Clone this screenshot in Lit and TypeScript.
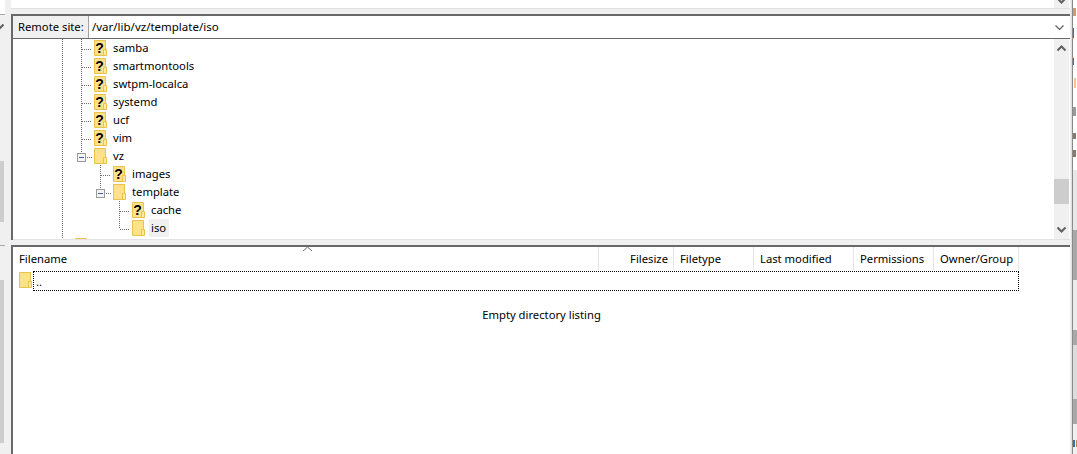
import { LitElement, html, css, svg } from "lit";
import { customElement } from "lit/decorators.js";
import { styleMap } from "lit/directives/style-map.js";

type Row = {
  name: string;
  icon: number;
  q: boolean;
  v: [number, number, number][];
  h?: [number, number];
  box?: number;
  selected?: boolean;
};

const X1 = 62, X2 = 81, X3 = 100, X4 = 119;
const leaf = (name: string): Row => ({
  name, icon: 94, q: true,
  v: [[X1, 0, 18], [X2, 0, 18]],
  h: [82, 92],
});
const rows: Row[] = [
  leaf("samba"), leaf("smartmontools"), leaf("swtpm-localca"), leaf("systemd"), leaf("ucf"), leaf("vim"),
  { name: "vz", icon: 94, q: false, v: [[X1, 0, 18], [X2, 0, 6], [X3, 16, 18]], h: [87, 92], box: 77 },
  { name: "images", icon: 113, q: true, v: [[X1, 0, 18], [X3, 0, 18]], h: [101, 111] },
  { name: "template", icon: 113, q: false, v: [[X1, 0, 18], [X3, 0, 6], [X4, 16, 18]], h: [106, 111], box: 96 },
  { name: "cache", icon: 132, q: true, v: [[X1, 0, 18], [X4, 0, 18]], h: [120, 130] },
  { name: "iso", icon: 132, q: false, v: [[X1, 0, 18], [X4, 0, 10]], h: [120, 130], selected: true },
  { name: "", icon: 75, q: false, v: [[X1, 0, 18]] },
];

const columns = [
  { label: "Filename", width: 586, end: false },
  { label: "Filesize", width: 75, end: true },
  { label: "Filetype", width: 80, end: false },
  { label: "Last modified", width: 100, end: false },
  { label: "Permissions", width: 80, end: false },
  { label: "Owner/Group", width: 85, end: false },
];

const folder = (q: boolean) => html`<svg class="folder" width="13" height="16" viewBox="0 0 13 16">
  <path d="M.5.5h11v15H.5z" fill="#fde28a" stroke="#eac24b"/>
  <path d="M9.500 15.500v-6h3v6z" fill="#ffe9a6" stroke="#eac24b"/>
  ${q ? svg`<text x="5.500" y="13" text-anchor="middle" class="qm">?</text>` : ""}
</svg>`;

const chevron = (up: boolean) => html`<svg class="chev" width="11" height="7" viewBox="0 0 11 7">
  <path d=${up ? "M1.5 5.5l4-4 4 4" : "M1.5 1.5l4 4 4-4"} fill="none" stroke="#606060" stroke-width="2"/>
</svg>`;

const guides = (r: Row) => html`<svg class="guides" width="180" height="18" viewBox="0 0 180 18">
  ${r.v.map(([x, a, b]) => svg`<line x1=${x + 0.5 - 13} x2=${x + 0.5 - 13} y1=${a} y2=${b} class="dot"/>`)}
  ${r.h ? svg`<line x1=${r.h[0] - 13} x2=${r.h[1] - 13} y1="10.5" y2="10.5" class="dot"/>` : ""}
  ${r.box !== undefined
    ? svg`<rect x=${r.box - 13 + 0.5} y="6.5" width="8" height="8" fill="#f4f4f4" stroke="#9a9a9a"/>
          <line x1=${r.box - 13 + 2} x2=${r.box - 13 + 7} y1="10.5" y2="10.5" stroke="#44619d"/>`
    : ""}
</svg>`;

@customElement("app-root")
export class AppRoot extends LitElement {
  static styles = css`
    :host {
      display: block;
      width: 1077px;
      height: 454px;
      overflow: hidden;
      font-family: "Noto Sans", "Open Sans", sans-serif;
      font-size: 11.25px;
      color: #000;
    }
    .root { display: flex; width: 1077px; height: 454px; background: #f0f0f0; }

    .left { width: 11px; flex: none; display: flex; flex-direction: column; }
    .left-top { height: 14px; background: #fff; border-bottom: 1px solid #a8a8a8; width: 5px; flex: none; box-sizing: content-box; }
    .left-track { width: 4px; height: 224px; flex: none; overflow: hidden; position: relative; }
    .left-chev { height: 23px; width: 4px; overflow: hidden; display: flex; align-items: center; justify-content: flex-end; }
    .left-chev svg { flex: none; margin-right: -1px; }
    .left-thumb { width: 4px; background: #cdcdcd; height: 61px; margin-top: 123px; }
    .left-sep { height: 6px; flex: none; }
    .left-line { height: 1px; width: 5px; background: #a8a8a8; flex: none; }
    .left-thumb2 { width: 4px; background: #cdcdcd; height: 163px; margin-top: 34px; }

    .center { width: 1059px; flex: none; display: flex; flex-direction: column; }
    .top { height: 14px; flex: none; display: flex; flex-direction: column; }
    .top-white { height: 8px; background: #fff; border-bottom: 1px solid #e0e0e0; display: flex; justify-content: flex-end; }
    .top-scroll { width: 15px; margin-right: 1px; background: #f0f0f0; overflow: hidden; display: flex; justify-content: center; align-items: flex-end; }
    .top-scroll svg { flex: none; margin-bottom: 4px; }

    .panel { border-left: 2px solid; border-top: 2px solid; border-image: linear-gradient(#696969, #696969) 1; background: #fff; display: flex; flex-direction: column; }
    .panel.remote { height: 224px; flex: none; }
    .panel.list { flex: 1; min-height: 0; margin-top: 5px; position: relative; }

    .addr { height: 22px; flex: none; display: flex; border-bottom: 1px solid #696969; }
    .addr-label { width: 76px; padding-left: 5px; box-sizing: border-box; background: #f0f0f0; border-right: 1px solid #a0a0a0; line-height: 22px; white-space: nowrap; }
    .addr-value { flex: 1; padding-left: 3px; line-height: 22px; white-space: nowrap; font-size: 11.5px; }
    .addr-chev { width: 20px; display: flex; align-items: center; justify-content: center; padding-right: 1px; }
    .thin path { stroke-width: 1.2; }

    .tree-wrap { flex: 1; min-height: 0; display: flex; }
    .tree { flex: 1; min-width: 0; overflow: hidden; height: 200px; }
    .row { height: 18px; display: flex; align-items: flex-start; position: relative; box-sizing: border-box; }
    .guides { position: absolute; left: 0; top: 0; }
    .dot { stroke: #6e6e6e; stroke-dasharray: 1 1; stroke-width: 1; }
    .folder { display: block; flex: none; margin-top: 1px; position: relative; }
    .qm { font-family: "Liberation Sans", sans-serif; font-weight: 700; font-size: 14px; fill: #000; }
    .name { margin-left: 4px; padding: 0 2px; height: 18px; line-height: 18px; position: relative; white-space: nowrap; }
    .name.sel { background: #f0f0f0; padding-right: 3px; }

    .scroll { width: 15px; margin-right: 1px; flex: none; background: #f0f0f0; display: flex; flex-direction: column; align-items: center; height: 200px; }
    .scroll .chev { flex: none; margin-top: 6px; }
    .thumb { width: 15px; height: 25px; background: #cdcdcd; margin-top: 127px; flex: none; }
    .scroll .chev.last { margin-top: 22px; }
    .rule { height: 1px; background: #e3e3e3; flex: none; }

    .head { display: flex; height: 23px; flex: none; }
    .col { box-sizing: border-box; border-right: 1px solid #e5e5e5; padding: 0 6px; line-height: 23px; white-space: nowrap; flex: none; }
    .col.end { text-align: right; padding-right: 5px; }
    .sort { position: absolute; left: 289px; top: -1px; }
    .sort path { stroke: #707070; stroke-width: 1; }
    .file { display: flex; height: 20px; flex: none; margin-top: 1px; padding-left: 6px; }
    .file .folder { margin-top: 1px; }
    .file-name { width: 986px; box-sizing: border-box; margin-left: 1px; border: 1px dotted #000; line-height: 20px; padding-left: 2px; height: 20px; }
    .empty { margin-top: 15px; text-align: center; line-height: 18px; }

    .side { width: 7px; flex: none; display: flex; }
    .side-gap { width: 1px; }
    .side-line { width: 2px; background: linear-gradient(90deg, #e0e0e0 0, #e0e0e0 50%, #8a8a8a 50%, #8a8a8a 100%); }
    .side-art { display: block; width: 4px; }
  `;

  render() {
    return html`<div class="root">
      <div class="left">
        <div class="left-top"></div>
        <div class="left-track">
          <div class="left-chev">${chevron(false)}</div>
          <div class="left-thumb"></div>
        </div>
        <div class="left-sep"></div>
        <div class="left-line"></div>
        <div class="left-thumb2"></div>
      </div>

      <div class="center">
        <div class="top">
          <div class="top-white"><div class="top-scroll">${chevron(false)}</div></div>
        </div>
        <div class="panel remote">
          <div class="addr">
            <div class="addr-label">Remote site:</div>
            <div class="addr-value">/var/lib/vz/template/iso</div>
            <div class="addr-chev thin">${chevron(false)}</div>
          </div>
          <div class="tree-wrap">
            <div class="tree">
              ${rows.map((r) => html`<div class="row" style=${styleMap({ paddingLeft: `${r.icon - 13}px` })}>
                ${guides(r)} ${folder(r.q)}
                ${r.name ? html`<span class="name ${r.selected ? "sel" : ""}">${r.name}</span>` : ""}
              </div>`)}
            </div>
            <div class="scroll">
              ${chevron(true)}
              <div class="thumb"></div>
              <svg class="chev last" width="11" height="7" viewBox="0 0 11 7"><path d="M1.5 1.5l4 4 4-4" fill="none" stroke="#606060" stroke-width="2"/></svg>
            </div>
          </div>
          <div class="rule"></div>
        </div>
        <div class="panel list">
          <svg class="sort" width="11" height="6" viewBox="0 0 11 6"><path d="M1 5l4.500-4 4.500 4" fill="none"/></svg>
          <div class="head">
            ${columns.map((c) => html`<div class="col ${c.end ? "end" : ""}" style=${styleMap({ width: `${c.width}px` })}>${c.label}</div>`)}
          </div>
          <div class="file">
            ${folder(false)}
            <div class="file-name">..</div>
          </div>
          <div class="empty">Empty directory listing</div>
        </div>
      </div>

      <div class="side">
        <div class="side-gap"></div>
        <div class="side-line"></div>
        <svg class="side-art" width="4" height="454" viewBox="0 0 4 454">
          <rect width="4" height="170" fill="#fff"/>
          <rect y="8" width="3" height="8" fill="#c9a06a"/>
          <rect y="28" width="1" height="10" fill="#3b6ea5"/>
          <rect y="58" width="1" height="7" fill="#3b6ea5"/>
          <rect x="1" y="78" width="2" height="10" fill="#f0c48e"/>
          <rect y="107" width="3" height="9" fill="#9a9a9a"/>
          <rect y="133" width="3" height="6" fill="#8a7a6a"/>
          <rect y="150" width="3" height="7" fill="#8a7a6a"/>
          <rect y="170" width="4" height="60" fill="#e8e8e8"/>
          <rect y="230" width="4" height="50" fill="#a8a8a8"/>
          <rect y="280" width="4" height="50" fill="#ececec"/>
          <rect y="330" width="4" height="15" fill="#a8a8a8"/>
          <rect y="345" width="4" height="54" fill="#dcdcdc"/>
          <rect y="399" width="4" height="25" fill="#a8a8a8"/>
          <rect y="424" width="4" height="30" fill="#f0f0f0"/>
          <rect y="440" width="2" height="7" fill="#3b6ea5"/>
          <rect x="3" y="440" width="1" height="7" fill="#d08a3a"/>
        </svg>
      </div>
    </div>`;
  }
}
